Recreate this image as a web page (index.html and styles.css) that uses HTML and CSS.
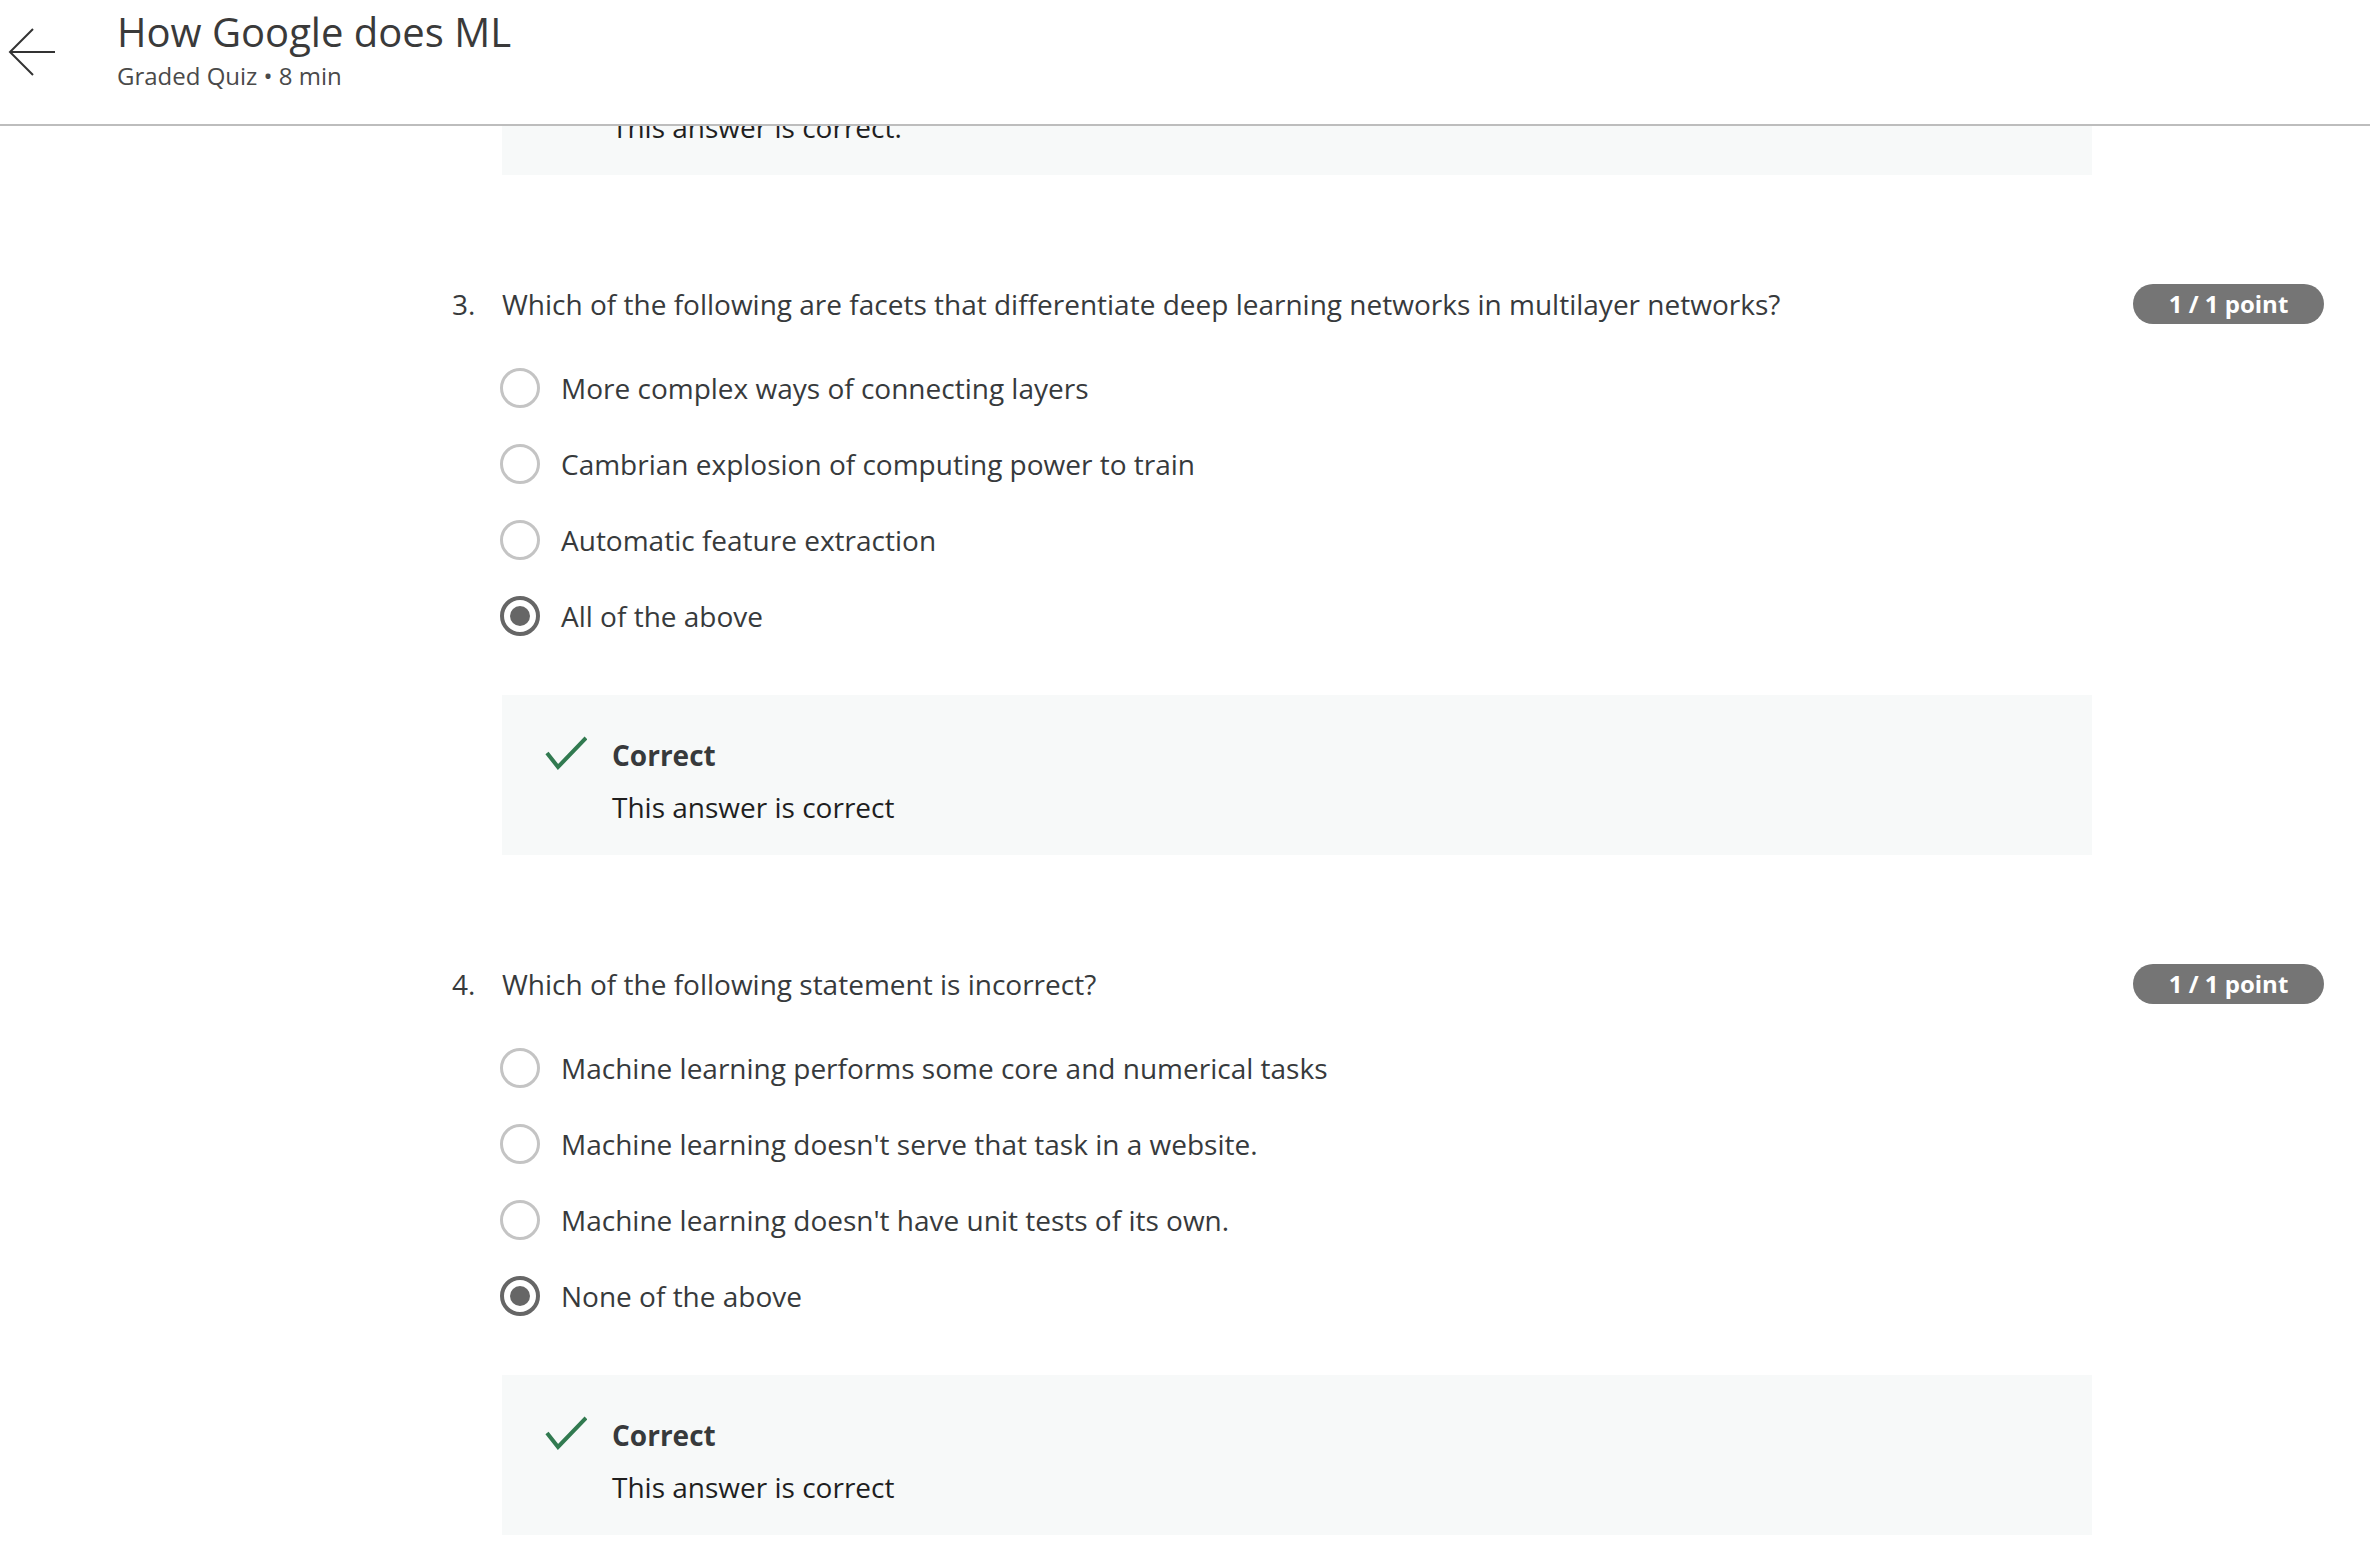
FILE: index.html
```html
<!DOCTYPE html>
<html lang="en">
<head>
<meta charset="utf-8">
<title>How Google does ML</title>
<link rel="stylesheet" href="styles.css">
</head>
<body>
<header class="topbar">
  <button class="back" aria-label="Back">
    <svg width="48" height="48" viewBox="0 0 48 48"><polyline points="25,1 2,24 25,47" fill="none" stroke="#333" stroke-width="2"/><line x1="2" y1="24" x2="47" y2="24" stroke="#333" stroke-width="2"/></svg>
  </button>
  <div class="titles">
    <div class="title">How Google does ML</div>
    <div class="subtitle">Graded Quiz • 8 min</div>
  </div>
</header>

<main class="page">
  <section class="question partial">
    <div class="qnum"></div>
    <div class="qmain">
      <div class="feedback">
        <svg class="check" width="42" height="34" viewBox="0 0 42 34"><polyline points="2,17 13,31 41,2" fill="none" stroke="#317a50" stroke-width="4"/></svg>
        <div class="fb-text">
          <div class="fb-title">Correct</div>
          <div class="fb-msg">This answer is correct.</div>
        </div>
      </div>
    </div>
    <div class="qside"></div>
  </section>

  <section class="question">
    <div class="qnum">3.</div>
    <div class="qmain">
      <div class="qtext">Which of the following are facets that differentiate deep learning networks in multilayer networks?</div>
      <ul class="options">
        <li class="option"><span class="radio"></span><span>More complex ways of connecting layers</span></li>
        <li class="option"><span class="radio"></span><span>Cambrian explosion of computing power to train</span></li>
        <li class="option"><span class="radio"></span><span>Automatic feature extraction</span></li>
        <li class="option"><span class="radio checked"></span><span>All of the above</span></li>
      </ul>
      <div class="feedback">
        <svg class="check" width="42" height="34" viewBox="0 0 42 34"><polyline points="2,17 13,31 41,2" fill="none" stroke="#317a50" stroke-width="4"/></svg>
        <div class="fb-text">
          <div class="fb-title">Correct</div>
          <div class="fb-msg">This answer is correct</div>
        </div>
      </div>
    </div>
    <div class="qside"><span class="badge">1 / 1 point</span></div>
  </section>

  <section class="question">
    <div class="qnum">4.</div>
    <div class="qmain">
      <div class="qtext">Which of the following statement is incorrect?</div>
      <ul class="options">
        <li class="option"><span class="radio"></span><span>Machine learning performs some core and numerical tasks</span></li>
        <li class="option"><span class="radio"></span><span>Machine learning doesn't serve that task in a website.</span></li>
        <li class="option"><span class="radio"></span><span>Machine learning doesn't have unit tests of its own.</span></li>
        <li class="option"><span class="radio checked"></span><span>None of the above</span></li>
      </ul>
      <div class="feedback">
        <svg class="check" width="42" height="34" viewBox="0 0 42 34"><polyline points="2,17 13,31 41,2" fill="none" stroke="#317a50" stroke-width="4"/></svg>
        <div class="fb-text">
          <div class="fb-title">Correct</div>
          <div class="fb-msg">This answer is correct</div>
        </div>
      </div>
    </div>
    <div class="qside"><span class="badge">1 / 1 point</span></div>
  </section>
</main>
</body>
</html>
```
FILE: styles.css
```css
html, body {
  margin: 0;
  padding: 0;
  background: #ffffff;
  height: 1558px;
  overflow: hidden;
}
body {
  font-family: "Open Sans", "Noto Sans", sans-serif;
  color: #373a3c;
  position: relative;
}

.topbar {
  position: absolute;
  top: 0;
  left: 0;
  right: 0;
  height: 116px;
  background: #ffffff;
  border-bottom: 2px solid #bdbdbd;
  display: flex;
  align-items: flex-start;
  padding: 8px 0 0 8px;
  box-sizing: content-box;
  z-index: 10;
}

.back {
  border: 0;
  background: none;
  padding: 0;
  margin: 20px 0 0 0;
  width: 48px;
  height: 48px;
  display: block;
}
.back svg { display: block; }

.titles {
  margin-left: 61px;
}
.title {
  font-size: 40px;
  line-height: 48px;
  color: #3a3a3a;
}
.subtitle {
  font-size: 24px;
  line-height: 30px;
  margin-top: 5px;
  color: #4a4a4a;
}

.page {
  padding: 15px 46px 0 452px;
}

.question {
  display: flex;
  align-items: flex-start;
  margin-bottom: 109px;
}
.qnum {
  width: 50px;
  flex: none;
  font-size: 28px;
  line-height: 40px;
}
.qmain {
  width: 1590px;
  flex: none;
}
.qside {
  flex: 1;
  display: flex;
  justify-content: flex-end;
}
.qtext {
  font-size: 28px;
  line-height: 40px;
}

.badge {
  display: block;
  width: 191px;
  height: 40px;
  margin-top: 0;
  border-radius: 20px;
  background: #757575;
  color: #ffffff;
  font-weight: 700;
  font-size: 24px;
  line-height: 40px;
  text-align: center;
}

.options {
  list-style: none;
  margin: 44px 0 59px -2px;
  padding: 0;
  display: flex;
  flex-direction: column;
  gap: 36px;
}
.option {
  display: flex;
  align-items: center;
  gap: 21px;
  height: 40px;
  font-size: 28px;
  line-height: 40px;
}
.radio {
  width: 40px;
  height: 40px;
  box-sizing: border-box;
  border: 3px solid #c4c4c4;
  border-radius: 50%;
  flex: none;
  display: flex;
  align-items: center;
  justify-content: center;
  background: #fff;
}
.radio.checked {
  border: 4px solid #666666;
}
.radio.checked::after {
  content: "";
  width: 20px;
  height: 20px;
  border-radius: 50%;
  background: #666666;
}

.feedback {
  background: #f7f9f9;
  height: 160px;
  box-sizing: border-box;
  padding: 40px 0 0 43px;
  display: flex;
  align-items: flex-start;
  gap: 25px;
}
.check {
  display: block;
  flex: none;
  margin-top: 1px;
}
.fb-title {
  font-size: 28px;
  line-height: 40px;
  font-weight: 700;
  color: #373a3c;
}
.fb-msg {
  font-size: 28px;
  line-height: 40px;
  margin-top: 12px;
  color: #1f1f1f;
}
```
